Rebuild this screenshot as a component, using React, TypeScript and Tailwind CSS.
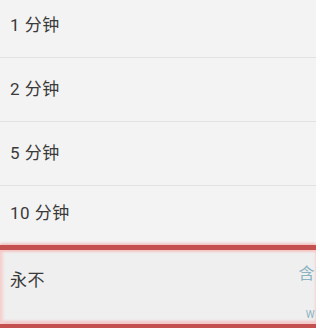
import React from 'react';

const options = ['1 分钟', '2 分钟', '5 分钟', '10 分钟'];

export default function App() {
  return (
    <div
      className="relative h-[328px] w-[316px] overflow-hidden bg-[#f3f3f4] text-[17px] tracking-[0.5px] text-[#3a3a3a]"
      style={{ fontFamily: "Roboto, 'Noto Sans CJK SC', sans-serif" }}
    >
      <div className="-mt-[6px] flex flex-col">
        {options.map((label, i) => (
          <div
            key={label}
            className={
              i < options.length - 1
                ? 'flex h-[64px] items-center border-b border-[#e2e2e4] pl-[10px]'
                : 'flex h-[59px] items-center pl-[10px] pb-[4px]'
            }
          >
            {label}
          </div>
        ))}

        {/* 选中项：红框 */}
        <div className="relative flex h-[84px] items-start border-y-[5px] border-[#c4514f] bg-[#efefef] pl-[10px] pt-[18px] shadow-[0_-2px_2px_#f3c3c3,inset_0_2px_2px_#f6c8c8,inset_3px_0_3px_#f6d2d2,inset_0_-3px_3px_#f3c6c6]">
          永不
          <span className="absolute right-[1px] top-[16px] text-[16px] leading-none text-[#8bb3c1]">含</span>
          <span className="absolute right-[1px] bottom-[4px] text-[10px] leading-none text-[#8bb3c1]">W</span>
        </div>
      </div>
    </div>
  );
}
